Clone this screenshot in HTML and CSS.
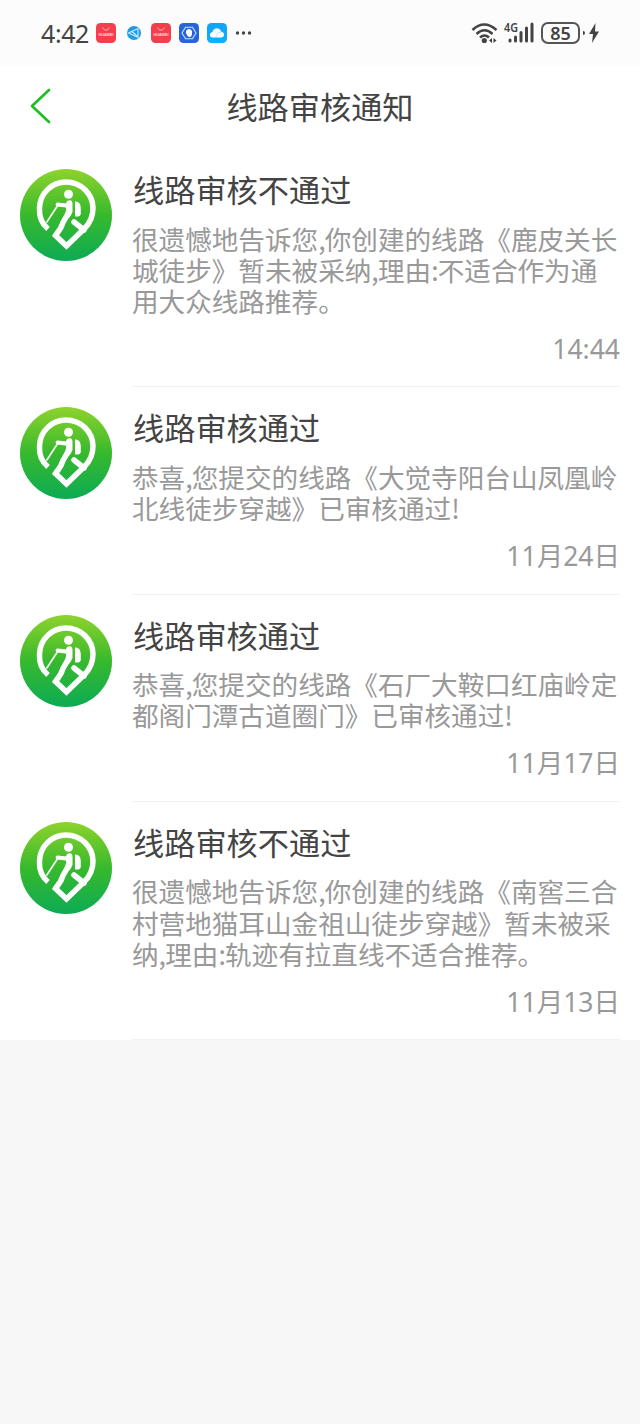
FILE: index.html
```html
<!DOCTYPE html>
<html lang="zh-CN">
<head>
<meta charset="utf-8">
<title>线路审核通知</title>
<link rel="stylesheet" href="styles.css">
</head>
<body>
<svg class="defs" aria-hidden="true">
  <defs>
    <linearGradient id="leaf" x1="0" y1="0" x2="0" y2="1">
      <stop offset="0" stop-color="#8ed32c"/>
      <stop offset=".5" stop-color="#37b92d"/>
      <stop offset="1" stop-color="#0dab55"/>
    </linearGradient>
    <linearGradient id="sky" x1="0" y1="0" x2="0" y2="1">
      <stop offset="0" stop-color="#12a2f8"/>
      <stop offset="1" stop-color="#08b4fb"/>
    </linearGradient>
    <symbol id="hiker" viewBox="0 0 92 92">
      <circle cx="46" cy="46" r="46" fill="url(#leaf)"/>
      <g fill="none" stroke="#fff">
        <path d="M28 60C21 54 19 47 19.500 39C20 24 32 13 46 13C61 13 73 25 73 39C73 48 70 54 64.500 59.500L46.500 77L35.500 66.500C38 62.500 41 60 42 56C43 51 48 48 49 41" stroke-width="5.500"/>
        <path d="M54 53L64 61" stroke-width="5.500" stroke-linecap="round"/>
        <path d="M26.500 53.500L38 36" stroke-width="1.600"/>
        <path d="M37.500 35.500L46 36.500" stroke-width="3.800" stroke-linecap="round"/>
      </g>
      <circle cx="48.500" cy="25.200" r="4.500" fill="#fff"/>
      <path d="M45.500 35.500L47 32Q52.500 29.500 52.500 35V43Q50 49 47 50L43 51L46.500 43Z" fill="#fff"/>
      <path d="M55 32.500Q60.500 32 60.800 39V45Q60.500 48 55 47.500Z" fill="#fff"/>
    </symbol>
    <symbol id="shop" viewBox="0 0 20 20">
      <rect width="20" height="20" rx="4.500" fill="#f43e4b"/>
      <path d="M7 4.500C7 8 13 8 13 4.500" fill="none" stroke="#ffb9b9" stroke-width="1"/>
      <text x="10" y="13.300" text-anchor="middle" textLength="15" lengthAdjust="spacingAndGlyphs" class="brand">HUAWEI</text>
    </symbol>
  </defs>
</svg>

<header class="status">
  <span class="clock">4:42</span>
  <div class="apps">
    <svg class="app"><use href="#shop"/></svg>
    <svg class="app" viewBox="0 0 20 20"><circle cx="10" cy="10" r="7" fill="#209be7"/><path d="M4.500 10L14 5.500V14.500ZM8 8.500L13 13" fill="none" stroke="#c9f0ff" stroke-width="1.100"/></svg>
    <svg class="app"><use href="#shop"/></svg>
    <svg class="app" viewBox="0 0 20 20"><rect width="20" height="20" rx="4.500" fill="#2563df"/><path d="M6.500 4.200H13.500L17 10L13.500 15.800H6.500L3 10Z" fill="none" stroke="#cfe2ff" stroke-width="1.100"/><path d="M7 10V7.500H8V6.500H9.300V6H10.700V6.500H12V7.500H13V11.500Q12.500 14 10.500 14Q8.500 14 7 10Z" fill="#fff"/></svg>
    <svg class="app" viewBox="0 0 20 20"><rect width="20" height="20" rx="4.500" fill="url(#sky)"/><path d="M6 14.500C2 14.500 2 9.500 5.500 9C6.500 4.500 12.500 4 14 8.500C18 9 18 14.500 14 14.500Z" fill="#fff"/><path d="M9 14.500Q9 10 14 9" fill="none" stroke="#8bd8ff" stroke-width=".7"/></svg>
    <svg class="more" viewBox="0 0 16 6"><circle cx="2" cy="3" r="1.700"/><circle cx="8" cy="3" r="1.700"/><circle cx="14" cy="3" r="1.700"/></svg>
  </div>
  <div class="signals">
    <svg class="wifi" viewBox="0 0 28 22"><g fill="none" stroke="#444" stroke-width="2.600"><path d="M1.500 8Q13 -3 25.500 8"/><path d="M5.500 12Q13.500 4.500 21.500 12"/><path d="M9 15.500Q13.500 11.500 18 15.500"/></g><circle cx="13.300" cy="18.500" r="2.600" fill="#444"/><path d="M18 18.500L21 16V21ZM25.500 18.500L22.500 16V21Z" fill="#444"/></svg>
    <svg class="cell" viewBox="0 0 31 22"><text x="0" y="10" textLength="14" lengthAdjust="spacingAndGlyphs" class="net">4G</text><g stroke="#444" stroke-width="3" stroke-linecap="round"><path d="M6 18V19M11.500 15V19M17 10.500V19M22.500 6V19M28 2V19"/></g></svg>
    <span class="battery">85</span>
    <svg class="bolt" viewBox="0 0 18 22"><path d="M1 9Q3 9 3 11T1 13Z"/><path d="M13.500 1L7 12H11L10 21L17 9.500H13Z"/></svg>
  </div>
</header>

<nav class="bar">
  <svg class="back" viewBox="0 0 24 38"><path d="M20 3L3 19L20 35"/></svg>
  <h1 class="heading">线路审核通知</h1>
</nav>

<main class="list">
  <article class="item">
    <svg class="avatar"><use href="#hiker"/></svg>
    <div class="content">
      <h2 class="title">线路审核不通过</h2>
      <p class="text">很遗憾地告诉您<i>,</i>你创建的线路《鹿皮关长<br>城徒步》暂未被采纳<i>,</i>理由<i>:</i>不适合作为通<br>用大众线路推荐。</p>
      <time class="time">14:44</time>
    </div>
  </article>
  <article class="item">
    <svg class="avatar"><use href="#hiker"/></svg>
    <div class="content">
      <h2 class="title">线路审核通过</h2>
      <p class="text">恭喜<i>,</i>您提交的线路《大觉寺阳台山凤凰岭<br>北线徒步穿越》已审核通过<i>!</i></p>
      <time class="time">11月24日</time>
    </div>
  </article>
  <article class="item">
    <svg class="avatar"><use href="#hiker"/></svg>
    <div class="content">
      <h2 class="title">线路审核通过</h2>
      <p class="text">恭喜<i>,</i>您提交的线路《石厂大鞍口红庙岭定<br>都阁门潭古道圈门》已审核通过<i>!</i></p>
      <time class="time">11月17日</time>
    </div>
  </article>
  <article class="item">
    <svg class="avatar"><use href="#hiker"/></svg>
    <div class="content">
      <h2 class="title">线路审核不通过</h2>
      <p class="text">很遗憾地告诉您<i>,</i>你创建的线路《南窖三合<br>村营地猫耳山金祖山徒步穿越》暂未被采<br>纳<i>,</i>理由<i>:</i>轨迹有拉直线不适合推荐。</p>
      <time class="time">11月13日</time>
    </div>
  </article>
</main>
</body>
</html>
```
FILE: styles.css
```css
* { box-sizing: border-box; }
body {
  margin: 0;
  min-height: 1424px;
  background: #f7f7f7;
  font-family: "Noto Sans", "Noto Sans CJK SC", sans-serif;
  color: #444;
}
svg { display: block; flex: none; }
.defs { width: 0; height: 0; position: absolute; }
.status {
  height: 66px;
  padding: 0 40px;
  display: flex;
  align-items: center;
  background: #fcfcfc;
}
.clock { width: 56px; padding-left: 1px; font-size: 25px; line-height: 36px; letter-spacing: -.4px; }
.apps { display: flex; align-items: center; gap: 7.7px; }
.app { width: 20px; height: 20px; }
.brand { font: bold 4px "Liberation Sans", sans-serif; fill: #ffd9d9; }
.more { width: 17px; height: 6px; margin-left: 1px; fill: #444; }
.signals { display: flex; align-items: center; margin-left: auto; }
.wifi { width: 28px; height: 22px; margin-left: -1px; }
.cell { width: 31px; height: 22px; margin: 0 6px 0 5px; overflow: visible; }
.net { font: 600 13px "Noto Sans", sans-serif; fill: #444; }
.battery {
  width: 39px;
  height: 22px;
  border: 2px solid #555;
  border-radius: 7px;
  font: 600 18px/18px "Noto Sans", sans-serif;
  text-align: center;
}
.bolt { width: 18px; height: 22px; margin-left: 2px; fill: #444; }
.bar {
  height: 83px;
  padding-bottom: 3px;
  display: grid;
  grid-template-columns: 60px 1fr 60px;
  align-items: center;
  background: #fff;
}
.back { width: 24px; height: 38px; margin-left: 29px; fill: none; stroke: #1fbe24; stroke-width: 2.700; stroke-linecap: round; stroke-linejoin: round; }
.heading { margin: 0; font: 400 31.200px/44px "Noto Sans CJK SC", sans-serif; text-align: center; }
.list { background: #fff; }
.item { display: flex; gap: 20px; padding: 0 20px; }
.avatar { width: 92px; height: 92px; margin-top: 20px; }
.content {
  flex: 1;
  display: flex;
  flex-direction: column;
  padding: 18px 0 19.600px;
  border-bottom: 1px solid #f2f2f2;
}
.title { margin: 0 0 0 1px; font: 400 31.200px/44px "Noto Sans CJK SC", sans-serif; }
.text { margin: 11.600px 0 14.600px; font: 400 26.600px/31.200px "Noto Sans CJK SC", sans-serif; color: #999; white-space: nowrap; }
.text i { font-style: normal; letter-spacing: -.8px; }
.time { font-size: 26.500px; line-height: 36px; text-align: right; color: #999; }
```
